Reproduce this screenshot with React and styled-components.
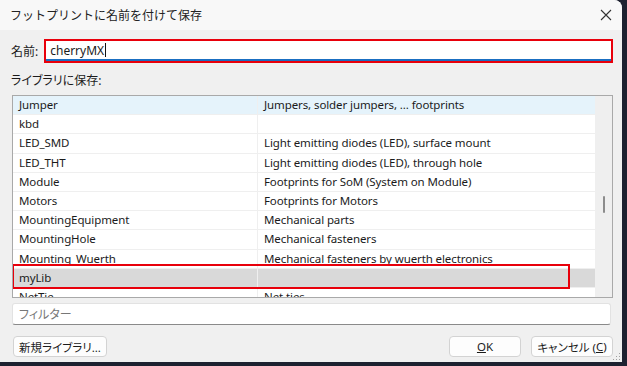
import styled, { createGlobalStyle } from "styled-components";

const GlobalStyle = createGlobalStyle`
  html, body {
    margin: 0;
    padding: 0;
    background: #1d2130;
  }
  body {
    font-family: "Noto Sans", "Noto Sans CJK JP", sans-serif;
    font-size: 12px;
    color: #1b1b1b;
    font-feature-settings: "palt";
  }
`;

const Window = styled.div`
  width: 622px;
  height: 362px;
  background: #f0f0f0;
  border-radius: 0 8px 0 0;
  display: flex;
  flex-direction: column;
  position: relative;
  overflow: hidden;
`;

const TitleBar = styled.div`
  height: 30px;
  background: #f8f8f8;
  display: flex;
  align-items: center;
  justify-content: space-between;
  padding: 0 8px 0 10px;
`;

const Title = styled.span`
  font-size: 12px;
  color: #222;
  font-feature-settings: normal;
`;

const CloseBtn = styled.div`
  width: 16px;
  height: 16px;
  display: flex;
  align-items: center;
  justify-content: center;
`;

const Body = styled.div`
  flex: 1;
  display: flex;
  flex-direction: column;
  padding: 0 9px 0 11px;
`;

const NameRow = styled.div`
  display: flex;
  align-items: center;
  gap: 6px;
  margin-top: 9px;
`;

const Label = styled.span`
  font-size: 12px;
  white-space: nowrap;
`;

const NameBox = styled.div`
  flex: 1;
  height: 24px;
  box-sizing: border-box;
  border: 2px solid #e8000b;
  background: #fff;
  display: flex;
`;

const NameInner = styled.div`
  flex: 1;
  border-bottom: 2px solid #1a6fc2;
  display: flex;
  align-items: center;
  padding-left: 4px;
`;

const Caret = styled.span`
  display: inline-block;
  width: 1px;
  height: 14px;
  background: #111;
  margin-left: 1px;
`;

const SectionLabel = styled.div`
  margin-top: 10px;
  height: 16px;
  line-height: 16px;
`;

const List = styled.div`
  margin-top: 6px;
  margin-left: 1px;
  height: 203px;
  box-sizing: border-box;
  border: 1px solid #a9a9a9;
  background: #fff;
  display: flex;
  position: relative;
  overflow: hidden;
`;

const Rows = styled.div`
  flex: 1;
  overflow: hidden;
`;

const Row = styled.div`
  height: 19.2px;
  box-sizing: border-box;
  display: grid;
  grid-template-columns: 244px 1fr;
  background: ${(p) => (p.state === "hover" ? "#e5f3fb" : p.state === "sel" ? "#d9d9d9" : "#fff")};
  border-bottom: 1px solid #efefef;
`;

const Cell = styled.div`
  padding-left: 6px;
  font-size: 11.5px;
  letter-spacing: -0.1px;
  line-height: 18px;
  white-space: nowrap;
  overflow: hidden;
  border-left: ${(p) => (p.second ? "1px solid #efefef" : "none")};
`;

const Marker = styled.div`
  position: absolute;
  left: -1px;
  top: 168px;
  width: 558px;
  height: 25px;
  box-sizing: border-box;
  border: 2px solid #e8000b;
  pointer-events: none;
`;

const ScrollBar = styled.div`
  width: 17px;
  background: #efefef;
  position: relative;
`;

const Thumb = styled.div`
  position: absolute;
  left: 8px;
  top: 100px;
  width: 2px;
  height: 17px;
  background: #8c8c8c;
  border-radius: 1px;
`;

const Filter = styled.div`
  margin-top: 5px;
  margin-left: 1px;
  margin-right: 2px;
  height: 22px;
  box-sizing: border-box;
  background: #fff;
  border: 1px solid #e2e2e2;
  border-bottom-color: #8a8a8a;
  border-radius: 3px;
  display: flex;
  align-items: center;
  padding-left: 6px;
  color: #777;
`;

const Footer = styled.div`
  margin-top: 11px;
  display: flex;
  align-items: center;
  gap: 10px;
  padding-left: 2px;
`;

const Button = styled.div`
  height: 21px;
  width: ${(p) => p.w}px;
  box-sizing: border-box;
  background: #fdfdfd;
  border: 1px solid #d3d3d3;
  border-radius: 4px;
  display: flex;
  align-items: center;
  justify-content: center;
  white-space: nowrap;
  font-size: 11.5px;
  margin-left: ${(p) => (p.push ? "auto" : "0")};
`;

const U = styled.span`
  text-decoration: underline;
`;

const Grip = styled.div`
  position: absolute;
  right: 2px;
  bottom: 2px;
  width: 8px;
  height: 8px;
  background-image: radial-gradient(circle, #a0a0a0 0.8px, transparent 1px);
  background-size: 3px 3px;
  clip-path: polygon(100% 0, 100% 100%, 0 100%);
`;

const rows = [
  ["Jumper", "Jumpers, solder jumpers, ... footprints", "hover"],
  ["kbd", ""],
  ["LED_SMD", "Light emitting diodes (LED), surface mount"],
  ["LED_THT", "Light emitting diodes (LED), through hole"],
  ["Module", "Footprints for SoM (System on Module)"],
  ["Motors", "Footprints for Motors"],
  ["MountingEquipment", "Mechanical parts"],
  ["MountingHole", "Mechanical fasteners"],
  ["Mounting_Wuerth", "Mechanical fasteners by wuerth electronics"],
  ["myLib", "", "sel"],
  ["NetTie", "Net ties"],
];

export default function App() {
  return (
    <>
      <GlobalStyle />
      <Window>
        <TitleBar>
          <Title>フットプリントに名前を付けて保存</Title>
          <CloseBtn>
            <svg width="12" height="12" viewBox="0 0 12 12">
              <path d="M1 1 L11 11 M11 1 L1 11" stroke="#333" strokeWidth="1.1" />
            </svg>
          </CloseBtn>
        </TitleBar>
        <Body>
          <NameRow>
            <Label>名前:</Label>
            <NameBox>
              <NameInner>
                cherryMX<Caret />
              </NameInner>
            </NameBox>
          </NameRow>
          <SectionLabel>ライブラリに保存:</SectionLabel>
          <List>
            <Rows>
              {rows.map(([name, desc, state]) => (
                <Row key={name} state={state}>
                  <Cell>{name}</Cell>
                  <Cell second>{desc}</Cell>
                </Row>
              ))}
            </Rows>
            <ScrollBar>
              <Thumb />
            </ScrollBar>
            <Marker />
          </List>
          <Filter>フィルター</Filter>
          <Footer>
            <Button w={94}>新規ライブラリ...</Button>
            <Button w={72} push>
              <U>O</U>K
            </Button>
            <Button w={82}>
              キャンセル (<U>C</U>)
            </Button>
          </Footer>
        </Body>
        <Grip />
      </Window>
    </>
  );
}
